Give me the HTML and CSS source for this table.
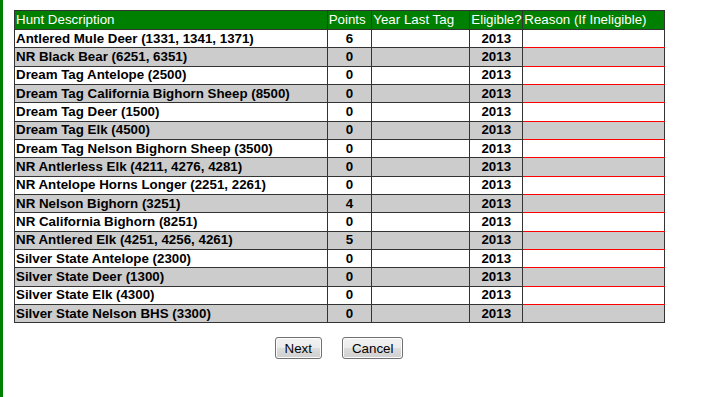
FILE: index.html
```html
<!DOCTYPE html>
<html>
<head>
<meta charset="utf-8">
<link rel="stylesheet" href="styles.css">
</head>
<body>
<div class="page">
  <div class="form">
    <table class="hunts">
      <colgroup>
        <col class="c-desc"><col class="c-pts"><col class="c-year"><col class="c-elig"><col class="c-reason">
      </colgroup>
      <thead>
        <tr class="head">
          <th>Hunt Description</th><th>Points</th><th>Year Last Tag</th><th>Eligible?</th><th>Reason (If Ineligible)</th>
        </tr>
      </thead>
      <tbody>
        <tr class="odd"><td>Antlered Mule Deer (1331, 1341, 1371)</td><td class="num">6</td><td></td><td class="num">2013</td><td class="reason"></td></tr>
        <tr class="even"><td>NR Black Bear (6251, 6351)</td><td class="num">0</td><td></td><td class="num">2013</td><td class="reason"></td></tr>
        <tr class="odd"><td>Dream Tag Antelope (2500)</td><td class="num">0</td><td></td><td class="num">2013</td><td class="reason"></td></tr>
        <tr class="even"><td>Dream Tag California Bighorn Sheep (8500)</td><td class="num">0</td><td></td><td class="num">2013</td><td class="reason"></td></tr>
        <tr class="odd"><td>Dream Tag Deer (1500)</td><td class="num">0</td><td></td><td class="num">2013</td><td class="reason"></td></tr>
        <tr class="even"><td>Dream Tag Elk (4500)</td><td class="num">0</td><td></td><td class="num">2013</td><td class="reason"></td></tr>
        <tr class="odd"><td>Dream Tag Nelson Bighorn Sheep (3500)</td><td class="num">0</td><td></td><td class="num">2013</td><td class="reason"></td></tr>
        <tr class="even"><td>NR Antlerless Elk (4211, 4276, 4281)</td><td class="num">0</td><td></td><td class="num">2013</td><td class="reason"></td></tr>
        <tr class="odd"><td>NR Antelope Horns Longer (2251, 2261)</td><td class="num">0</td><td></td><td class="num">2013</td><td class="reason"></td></tr>
        <tr class="even"><td>NR Nelson Bighorn (3251)</td><td class="num">4</td><td></td><td class="num">2013</td><td class="reason"></td></tr>
        <tr class="odd"><td>NR California Bighorn (8251)</td><td class="num">0</td><td></td><td class="num">2013</td><td class="reason"></td></tr>
        <tr class="even"><td>NR Antlered Elk (4251, 4256, 4261)</td><td class="num">5</td><td></td><td class="num">2013</td><td class="reason"></td></tr>
        <tr class="odd"><td>Silver State Antelope (2300)</td><td class="num">0</td><td></td><td class="num">2013</td><td class="reason"></td></tr>
        <tr class="even"><td>Silver State Deer (1300)</td><td class="num">0</td><td></td><td class="num">2013</td><td class="reason"></td></tr>
        <tr class="odd"><td>Silver State Elk (4300)</td><td class="num">0</td><td></td><td class="num">2013</td><td class="reason"></td></tr>
        <tr class="even last"><td>Silver State Nelson BHS (3300)</td><td class="num">0</td><td></td><td class="num">2013</td><td class="reason"></td></tr>
      </tbody>
    </table>
    <div class="actions">
      <button type="button" class="btn">Next</button>
      <button type="button" class="btn">Cancel</button>
    </div>
  </div>
</div>
</body>
</html>
```

FILE: styles.css
```css
html, body {
  margin: 0;
  padding: 0;
  background: #ffffff;
}

.page {
  border-left: 3px solid #008000;
  min-height: 397px;
  box-sizing: border-box;
  padding: 10px 0 0 11px;
  font-family: "Liberation Sans", Arial, sans-serif;
  font-size: 13.333px;
  color: #000;
}

.form {
  width: 650px;
}

.hunts {
  width: 650px;
  table-layout: fixed;
  border-collapse: collapse;
  border: 1px solid #333333;
}

.c-desc { width: 312.7px; }
.c-pts { width: 44.6px; }
.c-year { width: 98px; }
.c-elig { width: 53px; }
.c-reason { width: 141.7px; }

.hunts th,
.hunts td {
  border: 1px solid #333333;
  padding: 0 1px;
  line-height: 16px;
  white-space: nowrap;
  overflow: hidden;
  vertical-align: middle;
}

.hunts th {
  background: #008000;
  color: #ffffff;
  font-weight: normal;
  text-align: left;
  height: 18px;
  padding-top: 0;
}

.hunts td {
  font-weight: bold;
  height: 17.333px;
}

.hunts td.num {
  text-align: center;
}

.odd td { background: #ffffff; }
.even td { background: #cccccc; }

.hunts td.reason {
  border-bottom: 1px solid #ff0000;
}

.hunts tr.last td.reason {
  border-bottom: 1px solid #333333;
}

.actions {
  display: flex;
  justify-content: center;
  gap: 20px;
  margin-top: 14px;
}

.btn {
  font-family: "Liberation Sans", Arial, sans-serif;
  font-size: 13.333px;
  color: #000;
  height: 21.5px;
  padding: 0 9px;
  border: 1px solid #707070;
  border-radius: 3px;
  background: linear-gradient(#f2f2f2 0%, #ebebeb 50%, #dddddd 50%, #cfcfcf 100%);
  box-shadow: inset 0 0 0 1px #fcfcfc;
}
```
